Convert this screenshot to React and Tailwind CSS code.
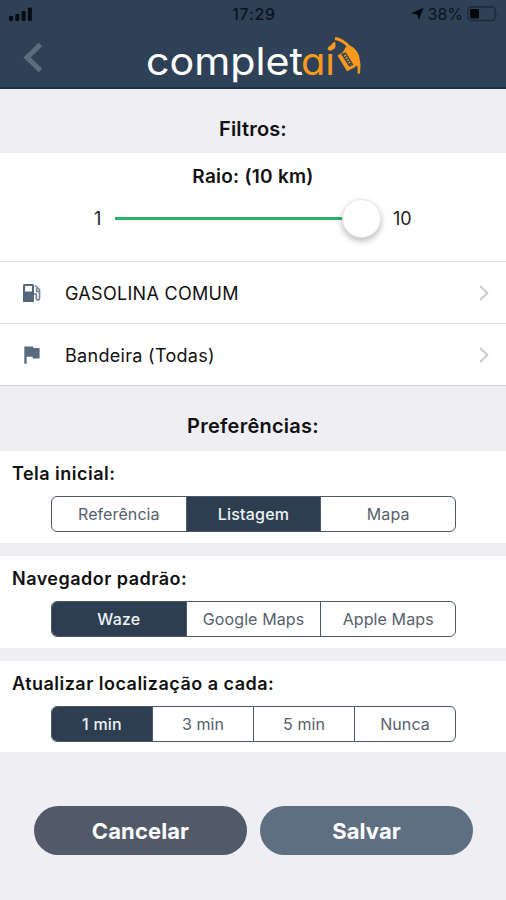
import React from 'react'

const rows = [
  { label: 'GASOLINA COMUM', icon: FuelIcon },
  { label: 'Bandeira (Todas)', icon: FlagIcon },
]

const preferences = [
  { title: 'Tela inicial:', options: ['Referência', 'Listagem', 'Mapa'], active: 1, height: 'h-[92px]' },
  { title: 'Navegador padrão:', options: ['Waze', 'Google Maps', 'Apple Maps'], active: 0, height: 'h-[92px]' },
  { title: 'Atualizar localização a cada:', options: ['1 min', '3 min', '5 min', 'Nunca'], active: 0, height: 'h-[91px]' },
]

function FuelIcon() {
  return (
    <svg width="20" height="20" viewBox="0 0 20 20" fill="none">
      <path fillRule="evenodd" fill="#53677d" d="M2.5 1h8Q12 1 12 2.5V19H1V2.5Q1 1 2.5 1Zm.6 2v5.500h6.800V3Z" />
      <path d="M13.200 2.500 17.500 6.500V15q0 2-1.600 2t-1.600-2V11H12" stroke="#75869a" strokeWidth="1.700" />
      <path d="M14.700 5v3.500h2.800" stroke="#75869a" strokeWidth="1.600" />
    </svg>
  )
}

function FlagIcon() {
  return (
    <svg width="20" height="20" viewBox="0 0 20 20">
      <path fill="#596b7e" d="M2.300 1.500h8.700l.6 1.600h6v10.400h-6.600l-.7-1.700H4.700v7H2.300Z" />
    </svg>
  )
}

function StatusBar() {
  return (
    <div className="flex h-[28px] items-center justify-between pl-[9px] pr-[7px] text-[#0c131b]">
      <svg className="w-[90px]" height="16" viewBox="0 0 90 16" fill="#080c12">
        <rect x="0" y="10" width="4" height="5" rx="1" />
        <rect x="6.3" y="8" width="4" height="7" rx="1" />
        <rect x="12.6" y="5" width="4" height="10" rx="1" />
        <rect x="18.9" y="1.5" width="4" height="13.5" rx="1" />
      </svg>
      <span className="text-[16px] font-medium tracking-[0.7px]">17:29</span>
      <div className="flex w-[90px] items-center justify-end">
        <svg width="14" height="14" viewBox="0 0 14 14">
          <path fill="#05080c" d="M13.500 .7 8.800 13 7.200 7.400 1 6.300Z" />
        </svg>
        <span className="ml-[4px] text-[16px]">38%</span>
        <svg className="ml-[4px] shrink-0" width="32" height="16" viewBox="0 0 32 16">
          <rect x="1" y="1" width="27" height="13.5" rx="3" fill="none" stroke="#1d2938" strokeWidth="1.3" />
          <rect x="3" y="3" width="9" height="9.5" rx="1" fill="#05080c" />
          <path d="M30 5.5q2 2 0 4.5Z" fill="#1d2938" />
        </svg>
      </div>
    </div>
  )
}

function Nozzle() {
  return (
    <svg width="34" height="42" viewBox="0 0 34 42">
      <path fill="#f7991c" d="M6.800 5.500c1.500 3.500 1 8-2.500 8S.5 9.500 6.800 5.500Z" />
      <path fill="none" stroke="#f7991c" strokeWidth="3" d="M7 2.500c6 .7 9 3 13.500 7.500" />
      <path fill="#f7991c" d="m9.500 19.500 5-2.800L19 9c5 .3 9.500 4 12 10.500l1.500 9-.5 9-2.300.5-.2-7.500-1.700-.8-.8 1.500-8 4Z" />
      <path fill="none" stroke="#2e4156" strokeWidth="1.300" d="m14 18.500 7.500 11.500 3-1.500-7-11.500Z" />
      <path fill="none" stroke="#2e4156" strokeWidth="2.600" strokeDasharray="1.500 1.300" d="m15.500 18 7.500 11.500" />
    </svg>
  )
}

function Header() {
  return (
    <header className="h-[89px] border-b-[2px] border-[#1b3347] bg-[#2e4156]">
      <StatusBar />
      <div className="flex h-[59px]">
        <svg className="ml-[22px] mt-[13px] shrink-0" width="22" height="34" viewBox="0 0 22 34">
          <path d="M18.500 3.500 5 16.500l13.500 13" fill="none" stroke="#5d6d7e" strokeWidth="5" />
        </svg>
        <div className="ml-[103px] mt-[8px] flex items-start">
          <svg
            className="[font-feature-settings:'cv11'_1]"
            width="189"
            height="48"
            viewBox="0 0 189 48"
            fontFamily="Inter, sans-serif"
            fontSize="38"
          >
            <text x="-1" y="38.500" fill="#fff" textLength="157" lengthAdjust="spacingAndGlyphs">complet</text>
            <text x="154" y="38.500" fill="#f7991c" textLength="34" lengthAdjust="spacingAndGlyphs">ai</text>
          </svg>
          {/* the fuel drop sits over the dot of the i */}
          <div className="-ml-[8px]">
            <Nozzle />
          </div>
        </div>
      </div>
    </header>
  )
}

function SectionTitle({ children, className }) {
  return (
    <h2 className={`flex items-center justify-center text-[20px] font-semibold ${className}`}>
      {children}
    </h2>
  )
}

function Segmented({ options, active }) {
  return (
    <div className="ml-[51px] flex h-[36px] w-[405px] overflow-hidden rounded-[6px] border border-[#4d5863]">
      {options.map((option, i) => (
        <button
          key={option}
          className={`flex-1 basis-0 text-[16px] ${i > 0 ? 'border-l border-[#4d5863]' : ''} ${
            i === active ? 'bg-[#2d3e50] font-medium tracking-[0.2px] text-[#eef3f7]' : 'tracking-[0.1px] text-[#56606b]'
          }`}
        >
          {option}
        </button>
      ))}
    </div>
  )
}

export default function App() {
  return (
    <div className="h-[900px] w-[506px] overflow-hidden bg-[#efeef3] font-['Inter',sans-serif] text-[#111]">
      <Header />

      {/* Filters */}
      <SectionTitle className="h-[64px] pt-[15px] tracking-[0.15px]">Filtros:</SectionTitle>
      <section className="h-[108px] bg-white pt-[10px]">
        <h3 className="text-center text-[19px] leading-[28px] font-semibold tracking-[0.25px]">Raio: (10 km)</h3>
        <div className="flex h-[54px] items-center text-[18px] text-[#222]">
          <span className="ml-[94px] w-[21px]">1</span>
          <div className="h-[3px] w-[227px] bg-[#2bb365]" />
          <div className="size-[39px] rounded-full border border-[#e8e8e8] bg-white shadow-[0_3px_6px_rgba(0,0,0,0.28)]" />
          <span className="ml-[12px]">10</span>
        </div>
      </section>
      {rows.map(({ label, icon: Icon }) => (
        <div key={label} className="flex h-[62px] items-center border-t-[1.5px] border-[#dedee0] bg-white pl-[22px]">
          <Icon />
          <span className="ml-[23px] pt-[2px] text-[18px] tracking-[0.3px]">{label}</span>
          <svg className="mr-[15px] ml-auto" width="14" height="18" viewBox="0 0 14 18">
            <path d="m3 2 7.500 7L3 16" fill="none" stroke="#c8c8cc" strokeWidth="1.800" />
          </svg>
        </div>
      ))}

      {/* Preferences */}
      <SectionTitle className="h-[66px] border-t border-[#d0d0d3] pt-[15px] tracking-[0.25px]">Preferências:</SectionTitle>
      <div className="space-y-[13px]">
        {preferences.map(({ title, options, active, height }) => (
          <section key={title} className={`bg-white pt-[9px] ${height}`}>
            <h3 className="mb-[8px] pl-[12px] text-[18px] leading-[28px] font-semibold tracking-[0.48px]">{title}</h3>
            <Segmented options={options} active={active} />
          </section>
        ))}
      </div>

      {/* Actions */}
      <div className="mt-[54px] ml-[34px] flex gap-[13px] text-[22px] font-bold tracking-[0.1px] text-white">
        <button className="h-[49px] w-[213px] rounded-full bg-[#505a69] pt-[1px]">Cancelar</button>
        <button className="h-[49px] w-[213px] rounded-full bg-[#5e6f82] pt-[1px]">Salvar</button>
      </div>
    </div>
  )
}
